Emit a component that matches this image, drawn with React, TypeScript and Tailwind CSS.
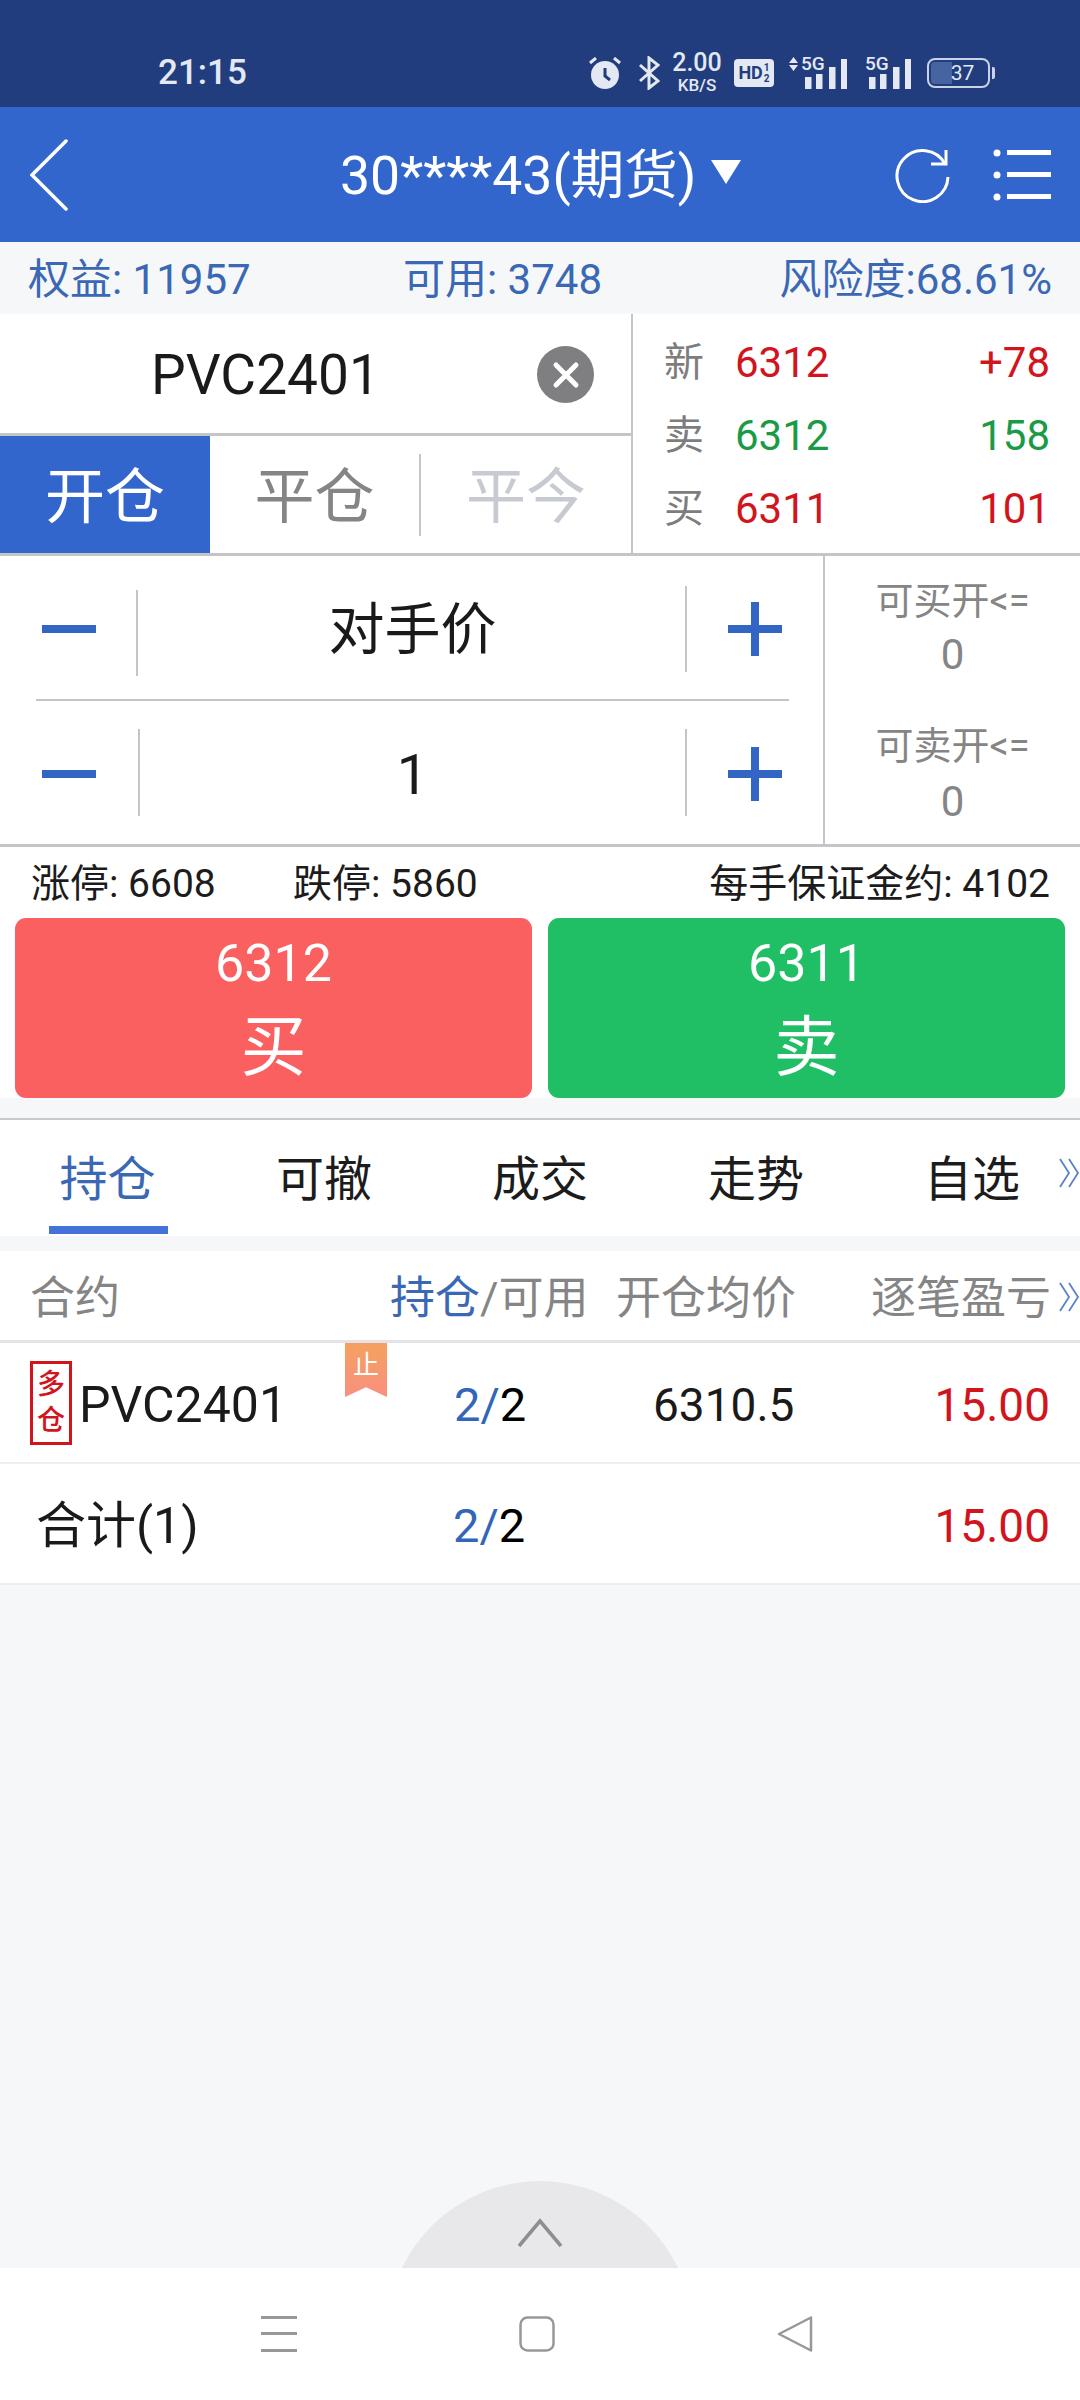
function SignalBars() {
  return (
    <svg width="42" height="30" viewBox="0 0 42 30" fill="#e3e8f3">
      <rect x="0" y="18" width="6.5" height="12" />
      <rect x="11" y="15" width="6.5" height="15" />
      <rect x="24" y="8" width="6.5" height="22" />
      <rect x="36" y="0" width="6" height="30" />
    </svg>
  );
}

function DoubleChevron() {
  return (
    <svg width="22" height="30" viewBox="0 0 22 30" fill="none" stroke="#5b82c8" strokeWidth="1.8">
      <path d="M2 1 L11 15 L2 29" />
      <path d="M11 1 L20 15 L11 29" />
    </svg>
  );
}

function StatusBar() {
  return (
    <div className="h-[107px] bg-[#213d7e] flex items-end pb-[14px] text-[#e3e8f3]">
      <span className="ml-[158px] w-[90px] text-[35px] leading-[40px] font-medium">21:15</span>
      <div className="ml-[340px] flex items-center h-[40px]">
        <svg width="34" height="32" viewBox="0 0 34 32" fill="#e3e8f3">
          <circle cx="17" cy="18" r="14" />
          <path d="M2 6 L8 1 M32 6 L26 1" stroke="#e3e8f3" strokeWidth="3" />
          <path d="M17 11 V19 L22 23" stroke="#213d7e" strokeWidth="3" fill="none" />
        </svg>
        <svg className="ml-[16px]" width="22" height="34" viewBox="0 0 22 34" fill="none" stroke="#e3e8f3" strokeWidth="3">
          <path d="M2 9 L20 25 L11 32 V2 L20 9 L2 25" />
        </svg>
        <div className="ml-[11px] w-[52px] flex flex-col items-center font-medium">
          <span className="text-[25px] leading-[20px]">2.00</span>
          <span className="text-[17px] leading-[15px] mt-[5px]">KB/S</span>
        </div>
        <div className="ml-[11px] w-[40px] h-[28px] bg-[#e3e8f3] rounded-[4px] flex items-center justify-center text-[#213d7e] text-[18px] font-bold leading-none">
          <span>HD</span>
          <span className="flex flex-col text-[10px] leading-[11px] ml-[1px]">
            <span>1</span>
            <span>2</span>
          </span>
        </div>
        <div className="ml-[15px] relative w-[58px] h-[32px] flex justify-end items-end">
          <svg className="absolute left-0 top-0" width="9" height="14" viewBox="0 0 9 14" fill="#e3e8f3">
            <path d="M4.5 0 L9 6 H0 Z M0 8 H9 L4.5 14 Z" />
          </svg>
          <span className="absolute left-[12px] top-[-2px] text-[19px] leading-[18px] font-medium">5G</span>
          <SignalBars />
        </div>
        <div className="ml-[18px] relative w-[46px] h-[32px] flex justify-end items-end">
          <span className="absolute left-0 top-[-2px] text-[19px] leading-[18px] font-medium">5G</span>
          <SignalBars />
        </div>
        <div className="ml-[16px] w-[63px] h-[30px] border-[2px] border-[#c9d2e6] rounded-[8px] relative flex items-center justify-center overflow-hidden">
          <div className="absolute left-[2px] top-[2px] bottom-[2px] w-[21px] rounded-l-[4px] bg-[#46649f]" />
          <span className="relative text-[21px] leading-none pl-[8px]">37</span>
        </div>
        <div className="ml-[2px] w-[3px] h-[12px] bg-[#c9d2e6] rounded-r-[2px]" />
      </div>
    </div>
  );
}

function Header() {
  return (
    <div className="h-[135px] bg-[#3366cc] flex items-center text-white">
      <svg className="ml-[30px]" width="38" height="72" viewBox="0 0 38 72" fill="none" stroke="white" strokeWidth="3.5" strokeLinecap="round">
        <path d="M36 2 L2 36 L36 70" />
      </svg>
      <div className="ml-[272px] flex items-center h-full text-[53.5px] pt-[4px]">
        <span>30****43(期货)</span>
        <span className="ml-[15px] mb-[10px] w-0 h-0 border-l-[15px] border-r-[15px] border-t-[24px] border-l-transparent border-r-transparent border-t-white" />
      </div>
      <svg className="ml-auto" width="56" height="56" viewBox="0 0 56 56" fill="none" stroke="white" strokeWidth="3">
        <path d="M50 17 A25.5 25.5 0 1 0 53 30" />
        <path d="M36 17 H51 V3" />
      </svg>
      <svg className="ml-[42px] mr-[29px]" width="58" height="54" viewBox="0 0 58 54" fill="white">
        <circle cx="4" cy="5" r="3.5" />
        <circle cx="4" cy="27" r="3.5" />
        <circle cx="4" cy="49" r="3.5" />
        <rect x="14" y="2" width="44" height="5" />
        <rect x="14" y="24" width="44" height="5" />
        <rect x="14" y="46" width="44" height="5" />
      </svg>
    </div>
  );
}

function InfoBar() {
  return (
    <div className="h-[72px] bg-[#f6f7f9] flex items-center pl-[28px] pr-[28px] pt-[2px] text-[42px] text-[#3a68b5]">
      <span className="w-[375px]">权益: 11957</span>
      <span>可用: 3748</span>
      <span className="ml-auto">风险度:68.61%</span>
    </div>
  );
}

function QuoteRow({ label, price, change, color }: { label: string; price: string; change: string; color: string }) {
  return (
    <div className="flex items-center h-[73px] pl-[31px] pr-[30px] text-[42px]">
      <span className="w-[71px] text-[40px] text-[#7d7d7d]">{label}</span>
      <span className={color}>{price}</span>
      <span className={`ml-auto ${color}`}>{change}</span>
    </div>
  );
}

function OrderPanel() {
  return (
    <div className="h-[242px] flex border-b-[3px] border-[#c4c5c9] bg-white">
      <div className="w-[633px] border-r-[2px] border-[#c4c5c9] flex flex-col">
        <div className="h-[122px] flex items-center border-b-[3px] border-[#c4c5c9]">
          <span className="ml-[151px] pt-[4px] text-[55px] text-[#1a1a1a]">PVC2401</span>
          <div className="ml-auto mr-[37px] mt-[2px] w-[57px] h-[57px] rounded-full bg-[#7f7f81] flex items-center justify-center">
            <svg width="30" height="30" viewBox="0 0 30 30" stroke="white" strokeWidth="5" strokeLinecap="round">
              <path d="M5 5 L25 25 M25 5 L5 25" />
            </svg>
          </div>
        </div>
        <div className="flex-1 flex items-center text-[60px]">
          <div className="w-[210px] h-full bg-[#3366cc] text-white flex items-center justify-center pt-[6px]">开仓</div>
          <div className="w-[211px] flex items-center justify-center text-[#858585] h-[82px] border-r-[2px] border-[#c4c5c9] pt-[6px]">平仓</div>
          <div className="flex-1 flex items-center justify-center text-[#c7cbd1] pt-[6px]">平今</div>
        </div>
      </div>
      <div className="flex-1 pt-[12px]">
        <QuoteRow label="新" price="6312" change="+78" color="text-[#d2141c]" />
        <QuoteRow label="卖" price="6312" change="158" color="text-[#1a9a45]" />
        <QuoteRow label="买" price="6311" change="101" color="text-[#d2141c]" />
      </div>
    </div>
  );
}

function Minus() {
  return <div className="w-[54px] h-[8px] -mt-[2px] bg-[#3366c4]" />;
}

function Plus() {
  return (
    <div className="relative w-[54px] h-[54px] -mt-[2px]">
      <div className="absolute left-0 top-[23px] w-[54px] h-[8px] bg-[#3366c4]" />
      <div className="absolute left-[23px] top-0 w-[8px] h-[54px] bg-[#3366c4]" />
    </div>
  );
}

function DividerEdge({ className }: { className: string }) {
  return <div className={`absolute w-[2px] bg-[#c4c5c9] ${className}`} />;
}

function Stepper({ value, first }: { value: string; first?: boolean }) {
  return (
    <div className="relative flex-1 flex items-center pt-[4px]">
      <DividerEdge className={first ? "left-[136px] top-[34px] h-[86px]" : "left-[138px] top-[28px] h-[87px]"} />
      <DividerEdge className={first ? "left-[685px] top-[30px] h-[86px]" : "left-[685px] top-[28px] h-[87px]"} />
      <div className="w-[140px] pl-[42px]">
        <Minus />
      </div>
      <div className="flex-1 text-center text-[56px] text-[#1a1a1a]">{value}</div>
      <div className="w-[138px] pl-[43px]">
        <Plus />
      </div>
    </div>
  );
}

function StepperPanel() {
  return (
    <div className="h-[291px] flex border-b-[3px] border-[#c4c5c9] bg-white">
      <div className="w-[825px] border-r-[2px] border-[#c4c5c9] flex flex-col">
        <Stepper value="对手价" first />
        <div className="h-[2px] ml-[36px] mr-[34px] bg-[#c4c5c9]" />
        <Stepper value="1" />
      </div>
      <div className="flex-1 flex flex-col items-center pt-[23px] text-[#858585]">
        <span className="text-[38px] leading-[44px]">可买开&lt;=</span>
        <span className="text-[42px] leading-[50px] mt-[7px]">0</span>
        <span className="text-[38px] leading-[44px] mt-[44px]">可卖开&lt;=</span>
        <span className="text-[42px] leading-[50px] mt-[9px]">0</span>
      </div>
    </div>
  );
}

function TradeButton({ price, label, color }: { price: string; label: string; color: string }) {
  return (
    <div className={`flex-1 h-[180px] rounded-[11px] ${color} text-white flex flex-col items-center`}>
      <span className="text-[52px] leading-[60px] mt-[16px]">{price}</span>
      <span className="text-[66px] leading-[80px] mt-[14px]">{label}</span>
    </div>
  );
}

function TradeSection() {
  return (
    <div className="bg-white">
      <div className="h-[71px] flex items-center pl-[31px] pr-[30px] pt-[3px] text-[39px] text-[#1c1c1c]">
        <span className="w-[262px]">涨停: 6608</span>
        <span>跌停: 5860</span>
        <span className="ml-auto">每手保证金约: 4102</span>
      </div>
      <div className="flex gap-[16px] px-[15px]">
        <TradeButton price="6312" label="买" color="bg-[#fb6060]" />
        <TradeButton price="6311" label="卖" color="bg-[#20bf65]" />
      </div>
    </div>
  );
}

function Tabs() {
  const tabs = ["持仓", "可撤", "成交", "走势", "自选"];
  return (
    <div className="h-[118px] flex border-t-[2px] border-[#c8c9cc] bg-white relative">
      {tabs.map((tab, i) => (
        <div key={tab} className="w-[216px] h-full relative flex items-center justify-center text-[48px] pt-[4px]">
          <span className={i === 0 ? "text-[#3a68b5] -ml-[1px]" : "text-[#1c1c1c]"}>{tab}</span>
          {i === 0 && <div className="absolute left-[49px] w-[119px] bottom-[2px] h-[8px] bg-[#4472d8]" />}
        </div>
      ))}
      <div className="absolute right-0 top-[38px]">
        <DoubleChevron />
      </div>
    </div>
  );
}

function PositionsTable() {
  return (
    <div className="bg-white">
      <div className="h-[92px] flex items-center pt-[6px] text-[45px] text-[#858585] border-b-[3px] border-[#e4e4e6] relative">
        <span className="w-[390px] pl-[30px]">合约</span>
        <span className="w-[226px]">
          <span className="text-[#3a68b5]">持仓</span>/可用
        </span>
        <span className="w-[255px]">开仓均价</span>
        <span>逐笔盈亏</span>
        <div className="absolute right-0 top-[31px]">
          <DoubleChevron />
        </div>
      </div>
      <div className="h-[121px] flex items-center text-[47px] border-b-[2px] border-[#eeeeef] relative">
        <div className="ml-[30px] w-[42px] h-[84px] border-[3px] border-[#d2141c] flex flex-col items-center justify-center text-[#d2141c] text-[28px] leading-[36px] font-medium">
          <span>多</span>
          <span>仓</span>
        </div>
        <span className="ml-[7px] w-[375px] pt-[5px] text-[50px] text-[#1a1a1a]">PVC2401</span>
        <span className="w-[199px] pt-[5px]">
          <span className="text-[#3366b8]">2/</span>2
        </span>
        <span className="pt-[5px] text-[46px] text-[#1a1a1a]">6310.5</span>
        <span className="ml-auto mr-[30px] pt-[5px] text-[46px] text-[#d2141c]">15.00</span>
        <div className="absolute left-[345px] top-0 w-[42px] h-[54px] bg-gradient-to-b from-[#f4a15f] to-[#f98f7e] [clip-path:polygon(0_0,100%_0,100%_100%,50%_82%,0_100%)] flex justify-center pt-[6px] text-white text-[26px] leading-[32px]">
          止
        </div>
      </div>
      <div className="h-[121px] flex items-center text-[47px] border-b-[2px] border-[#eeeeef]">
        <span className="ml-[36px] w-[417px] pt-[5px] text-[50px] text-[#1a1a1a]">合计(1)</span>
        <span className="pt-[5px]">
          <span className="text-[#3366b8]">2/</span>2
        </span>
        <span className="ml-auto mr-[30px] pt-[5px] text-[46px] text-[#d2141c]">15.00</span>
      </div>
    </div>
  );
}

function BottomHandle() {
  return (
    <div className="flex-1 flex items-end justify-center">
      <div className="relative w-[306px] h-[87px] overflow-hidden">
        <div className="w-[306px] h-[306px] rounded-full bg-[#e8e8ea]" />
        <svg className="absolute left-[130px] top-[37px]" width="46" height="30" viewBox="0 0 46 30" fill="none" stroke="#8e8e90" strokeWidth="3.5">
          <path d="M2 28 L23 3 L44 28" />
        </svg>
      </div>
    </div>
  );
}

function NavBar() {
  return (
    <div className="h-[132px] bg-white flex items-start pt-[48px]">
      <svg className="ml-[261px]" width="36" height="36" viewBox="0 0 36 36" fill="#989898">
        <rect x="0" y="0" width="36" height="3" />
        <rect x="0" y="16" width="36" height="3" />
        <rect x="0" y="33" width="36" height="3" />
      </svg>
      <svg className="ml-[222px]" width="36" height="36" viewBox="0 0 36 36" fill="none" stroke="#989898" strokeWidth="2.5">
        <rect x="1.5" y="1.5" width="33" height="33" rx="7" />
      </svg>
      <svg className="ml-[222px]" width="36" height="36" viewBox="0 0 36 36" fill="none" stroke="#989898" strokeWidth="2.5" strokeLinejoin="round">
        <path d="M2 18 L34 1.5 V34.5 Z" />
      </svg>
    </div>
  );
}

export default function App() {
  return (
    <div className="w-[1080px] h-[2400px] flex flex-col bg-[#f6f7f9] font-['Roboto','Noto_Sans_CJK_SC',sans-serif]">
      <StatusBar />
      <Header />
      <InfoBar />
      <OrderPanel />
      <StepperPanel />
      <TradeSection />
      <div className="h-[20px]" />
      <Tabs />
      <div className="h-[15px]" />
      <PositionsTable />
      <BottomHandle />
      <NavBar />
    </div>
  );
}
